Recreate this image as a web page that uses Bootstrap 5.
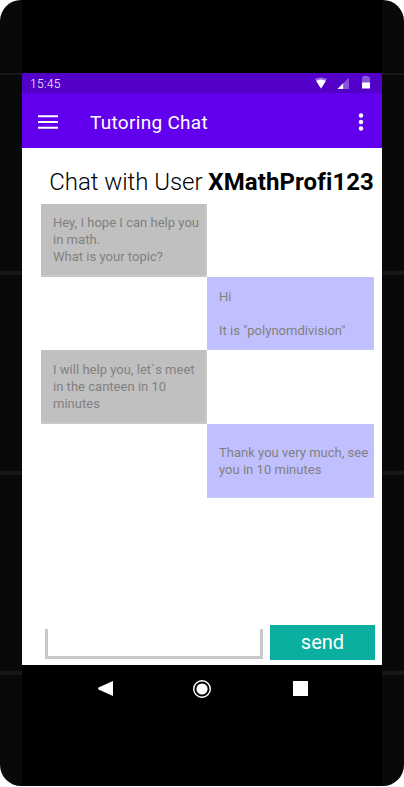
<!DOCTYPE html>
<html lang="en">
<head>
<meta charset="utf-8">
<meta name="viewport" content="width=device-width, initial-scale=1">
<title>Tutoring Chat</title>
<link href="https://cdn.jsdelivr.net/npm/bootstrap@5.3.0/dist/css/bootstrap.min.css" rel="stylesheet">
<style>
body{font-family:Roboto,sans-serif;background:#fff;overflow:hidden;font-variant-ligatures:none}
.phone{width:404px;height:786px;border-radius:21px;padding:0 22px;
  background:linear-gradient(#171717,#171717) 0 73px/100% 2px no-repeat,
  linear-gradient(#171717,#171717) 0 271px/100% 4px no-repeat,
  linear-gradient(#171717,#171717) 0 471px/100% 4px no-repeat,
  linear-gradient(#171717,#171717) 0 671px/100% 4px no-repeat,#090909}
.bezel{width:360px;height:786px;padding-top:73px;background:#000}
.status{height:20px;background:#5300c9;color:#fff;font-size:12px;font-weight:300;line-height:20px;padding:1px 11px 0 8px;letter-spacing:.3px}
.appbar{height:55px;background:#6200ee;padding:3px 16px 0}
.appbar h1{font-size:19px;font-weight:400;letter-spacing:.3px;line-height:24px;margin-left:32px;padding-top:1px}
.screen{height:517px;padding:20px 7px 5px 19px}
.heading{font-size:24px;font-weight:300;letter-spacing:-.04px;line-height:29px;width:333px;margin-bottom:7px;color:#000;white-space:nowrap}
.heading b{font-weight:700;letter-spacing:.1px}
.thread{width:333px}
.bubble{width:166px;height:73px;padding:10px 0 0 12px;font-size:13px;line-height:17px;color:#808080;white-space:nowrap;letter-spacing:.02px}
.lower{padding-top:11px}
.tall{height:74px}
.theirs{background:#c0c0c0;border-right:2px solid #c8c8c8;border-bottom:2px solid #c8c8c8}
.mine{width:167px;background:#c0c0ff;border-bottom:1px solid #c8c8ff}
.entry{width:218px;height:30px;border:3px solid #c8c8c8;border-top:0;border-radius:0;margin:2px 0 0 4px;outline:0}
.send{width:105px;height:35px;border-radius:0;border:0;background:#0aaf9f;color:#fff;font-size:20px;line-height:35px;padding:0}
.send:hover{background:#0aaf9f;color:#fff}
.navkeys{height:48px;padding:0 73px 0 75px}
svg{display:block}
</style>
<script src="https://cdn.jsdelivr.net/npm/bootstrap@5.3.0/dist/js/bootstrap.bundle.min.js"></script>
</head>
<body>
<div class="phone overflow-hidden">
 <div class="bezel">
  <div class="status d-flex justify-content-between">
   <span>15:45</span>
   <svg width="56" height="14" viewBox="0 -1 56 14" class="mt-1 overflow-visible" aria-hidden="true">
    <path d="M0 0Q6-3 12 0L6 9.500Z" fill="#9b6ae0"/><path d="M1.200 2Q6-1 10.800 2L6 9.500Z" fill="#fff"/>
    <path d="M22.500 10L34-1.500V10Z" fill="#8b53db"/><path d="M22.500 10L28.200 4.300V10Z" fill="#fff"/>
    <path d="M47 4V-1.500L48-2V-3H53.500V-2L55-1.500V4Z" fill="#8b53db"/><path d="M47 3.500H55V9Q55 9.500 54.500 9.500H47.500Q47 9.500 47 9Z" fill="#fff"/>
   </svg>
  </div>
  <header class="appbar d-flex align-items-center text-white">
   <svg width="20" height="14" viewBox="0 0 20 14" role="img" aria-label="Menu"><path d="M0 1.300H20M0 7H20M0 12.700H20" stroke="#fff" stroke-width="2"/></svg>
   <h1 class="mb-0 flex-grow-1">Tutoring Chat</h1>
   <svg width="10" height="18" viewBox="0 0 10 18" role="img" aria-label="More" fill="#fff"><circle cx="5" cy="2.500" r="2.200"/><circle cx="5" cy="9" r="2.200"/><circle cx="5" cy="15.500" r="2.200"/></svg>
  </header>
  <main class="screen bg-white d-flex flex-column">
   <h2 class="heading text-end">Chat with User <b>XMathProfi123</b></h2>
   <div class="thread d-flex flex-column">
    <div class="bubble theirs">Hey, I hope I can help you<br>in math.<br>What is your topic?</div>
    <div class="bubble mine lower align-self-end">Hi<br><br>It is "polynomdivision"</div>
    <div class="bubble theirs tall lower">I will help you, let`s meet<br>in the canteen in 10<br>minutes</div>
    <div class="bubble mine tall align-self-end d-flex align-items-center pt-0">Thank you very much, see<br>you in 10 minutes</div>
   </div>
   <div class="mt-auto d-flex justify-content-between align-items-center">
    <input class="entry" type="text" aria-label="Message">
    <button class="btn send" type="button">send</button>
   </div>
  </main>
  <nav class="navkeys d-flex justify-content-between align-items-center">
   <svg width="17" height="20" viewBox="0 0 17 20" role="img" aria-label="Back"><path d="M16 2V17L1.500 10.500Q.5 9.500 1.500 8.500Z" fill="#fff"/></svg>
   <svg width="20" height="20" viewBox="0 0 20 20" role="img" aria-label="Home"><circle cx="9" cy="10" r="8.300" fill="none" stroke="#fff" stroke-width="1.400"/><circle cx="9" cy="10" r="5.600" fill="#fff"/></svg>
   <svg width="17" height="20" viewBox="0 0 17 20" role="img" aria-label="Recent apps"><path d="M1 2H16V17H1Z" fill="#fff"/></svg>
  </nav>
 </div>
</div>
</body>
</html>
